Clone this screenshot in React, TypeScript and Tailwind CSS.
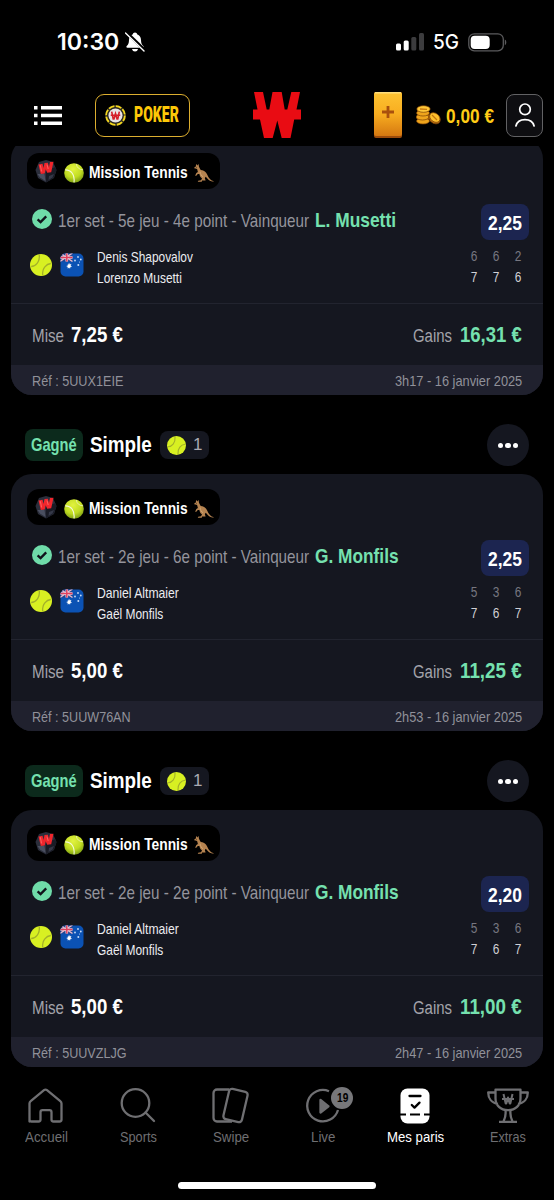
import React, { ReactNode, useLayoutEffect, useRef } from "react";

const FONT = "font-['Liberation_Sans_Narrow','Liberation_Sans',sans-serif]";

/* Text condensed horizontally to the width of its box. */
function Fit({ className = "", children }: { className?: string; children: ReactNode }) {
  const box = useRef<HTMLSpanElement>(null);
  const text = useRef<HTMLSpanElement>(null);
  useLayoutEffect(() => {
    if (box.current && text.current) {
      const ratio = box.current.clientWidth / text.current.offsetWidth;
      text.current.style.transform = `scaleX(${ratio})`;
    }
  });
  return (
    <span ref={box} className={`block shrink-0 ${className}`}>
      <span ref={text} className="inline-block origin-left whitespace-nowrap">
        {children}
      </span>
    </span>
  );
}

function BrandW({ className }: { className: string }) {
  return (
    <svg viewBox="0 0 48 46" className={className} fill="currentColor">
      <path d="M1 0h9l3.700 17.500h2.600L19.500 0h9.200l3 17.500h2.600L38.300 0H47l-3.500 17.500H48v10h-6.800l-3.700 18.500h-8.800L24.300 28.500 19.700 46H11L7 27.500H0v-10h4.500z" />
    </svg>
  );
}

function TennisBall({ className }: { className: string }) {
  return (
    <svg viewBox="0 0 22 22" className={className}>
      <circle cx="11" cy="11" r="11" fill="#d8f022" />
      <path d="M1.200 12.500C5.500 12.500 10 8 9.300.900M20.800 9.500C16.500 10 12 14 12.700 21" fill="none" stroke="#a3b02a" strokeWidth="1.300" />
    </svg>
  );
}

function TennisBallShaded({ className }: { className: string }) {
  return (
    <svg viewBox="0 0 22 22" className={className}>
      <defs>
        <radialGradient id="ballShade" cx="45%" cy="30%" r="72%">
          <stop offset="0" stopColor="#e2f340" />
          <stop offset=".6" stopColor="#c0dc22" />
          <stop offset="1" stopColor="#789a12" />
        </radialGradient>
      </defs>
      <circle cx="11" cy="11" r="10.800" fill="url(#ballShade)" />
      <path d="M1.500 7.500C8 7.500 12 13 11 21.300" fill="none" stroke="#f4f9d8" strokeWidth="1.300" />
      <path d="M13.500 1c.5 4 3.500 6.500 7.500 6.500" fill="none" stroke="#eef5bd" strokeWidth=".9" />
    </svg>
  );
}

function MissionBadge() {
  return (
    <svg viewBox="0 0 22 24" className="h-6 w-[22px] shrink-0">
      <path d="M4 3 11 1l7 2 3.500 8-2.500 8-8 4.500L3 19 .5 11z" fill="#2b2e3b" />
      <path d="m11 12 9.500-4 .8 4-2.800 7-7.500 4.300z" fill="#191b25" />
      <path d="m2.500 15 2.500 3.500 5.500 3.500-1-7z" fill="#4a4f60" />
      <path d="m14 17 5-2-1.500 3.500-4 2.500z" fill="#343847" />
      <path d="m3.500 5.500 4-.8 1 4.300 1-5 3.300-.3L14 8l1-5 3.500-.3-2.300 10.500-4 .6-1.500-3.600-1 4.200-3.900.6z" fill="#f0262c" />
      <path d="m5.300 6.200 1.300 6.300M12 5.500l1.200 4.500" stroke="#ff7d78" strokeWidth=".7" />
    </svg>
  );
}

function Kangaroo() {
  return (
    <svg viewBox="0 0 22 20" className="h-5 w-[22px]">
      <path d="M.8 5 2.800 3.400 3.200.8l1 1.600L5.600.9l.3 2.600c.7 1.300.9 2.500 2 3.500 1.800.3 3.800.9 5 2.400 1.600 1.900 2 4 3.400 5.800 1.200 1.500 2.500 2.600 4.700 3.100-2.300.6-4.600-.3-6.200-2.300l-2-2.300-1 1.200.8 2.700H9l-.2 1.200H4.800l.4-1 2.900-.5.9-2c-1.600-1-2.300-2.600-2.600-4.300l-1.600-.1-1.800 2.200-.8-.5 1.200-2.600 1.500-1L4.100 6z" fill="#b58350" />
      <path d="M7 8.500c.4 2.800 1.500 4.500 3 5.200" fill="none" stroke="#d2a673" strokeWidth="1" />
      <circle cx="3.400" cy="4.300" r=".45" fill="#2d1b0c" />
    </svg>
  );
}

function AustralianFlag() {
  return (
    <svg viewBox="0 0 24 24" className="h-6 w-6">
      <defs>
        <clipPath id="flagShape"><rect x=".5" y=".5" width="23" height="23" rx="5" /></clipPath>
      </defs>
      <g clipPath="url(#flagShape)">
        <path d="M0 0h24v24H0z" fill="#0b52b4" />
        <path d="M0 0h12.500v8.500H0z" fill="#23458f" />
        <path d="m0 0 12.500 8.500M12.500 0 0 8.500" stroke="#e5b9cb" strokeWidth="1.500" />
        <path d="M6.800 0v8.500M0 4.500h12.500" stroke="#f5dfe6" strokeWidth="2.600" />
        <path d="M6.800 0v8.500M0 4.500h12.500" stroke="#e0405e" strokeWidth="1.500" />
        <path d="m9 10.300.7 1.200 1.400-.2-.6 1.300 1 1-1.400.3-.1 1.400-1-.9-1.200.8.200-1.400-1.300-.6 1.300-.6v-1.400l1.100.8z" fill="#fff" stroke="#fff" strokeWidth=".4" />
        <g fill="#c8dcf8">
          <circle cx="18" cy="4" r=".9" /><circle cx="15" cy="7.500" r=".9" /><circle cx="20.800" cy="6.500" r=".9" /><circle cx="18.300" cy="12" r="1" /><circle cx="19.500" cy="9" r=".5" />
        </g>
      </g>
    </svg>
  );
}

type Bet = {
  market: string;
  pick: string;
  pickWidth: string;
  odds: string;
  players: { name: string; width: string; scores: number[] }[];
  stake: string;
  gain: string;
  reference: string;
  referenceWidth: string;
  date: string;
};

const ALTMAIER_MONFILS = [
  { name: "Daniel Altmaier", width: "w-[82px]", scores: [5, 3, 6] },
  { name: "Gaël Monfils", width: "w-[66px]", scores: [7, 6, 7] },
];

const BETS: Bet[] = [
  {
    market: "1er set - 5e jeu - 4e point - Vainqueur", pick: "L. Musetti", pickWidth: "w-[81px]", odds: "2,25",
    players: [
      { name: "Denis Shapovalov", width: "w-[96px]", scores: [6, 6, 2] },
      { name: "Lorenzo Musetti", width: "w-[85px]", scores: [7, 7, 6] },
    ],
    stake: "7,25 €", gain: "16,31 €", reference: "Réf : 5UUX1EIE", referenceWidth: "w-[91px]", date: "3h17 - 16 janvier 2025",
  },
  {
    market: "1er set - 2e jeu - 6e point - Vainqueur", pick: "G. Monfils", pickWidth: "w-[84px]", odds: "2,25",
    players: ALTMAIER_MONFILS, stake: "5,00 €", gain: "11,25 €", reference: "Réf : 5UUW76AN", referenceWidth: "w-[99px]", date: "2h53 - 16 janvier 2025",
  },
  {
    market: "1er set - 2e jeu - 2e point - Vainqueur", pick: "G. Monfils", pickWidth: "w-[84px]", odds: "2,20",
    players: ALTMAIER_MONFILS, stake: "5,00 €", gain: "11,00 €", reference: "Réf : 5UUVZLJG", referenceWidth: "w-[95px]", date: "2h47 - 16 janvier 2025",
  },
];

function BetCard({ bet }: { bet: Bet }) {
  return (
    <article className="mx-[11px] flex h-[257px] shrink-0 flex-col overflow-hidden rounded-[21px] bg-[#151720]">
      <div className="mt-[15px] ml-4 flex h-9 w-[193px] shrink-0 items-center rounded-xl bg-black pl-2">
        <MissionBadge />
        <TennisBallShaded className="mt-[3px] ml-[7px] h-5 w-5" />
        <Fit className="mt-[3px] ml-[5px] w-[99px] text-[17px] leading-9 font-bold text-white">Mission Tennis</Fit>
        <span className="mt-[4px] ml-[5px]"><Kangaroo /></span>
      </div>

      <div className="mt-[13px] flex h-9 shrink-0 pl-[21px]">
        <svg viewBox="0 0 20 20" className="mt-[7px] h-5 w-5 shrink-0">
          <circle cx="10" cy="10" r="10" fill="#6fdca9" />
          <path d="m5.600 10.300 3 2.800 5.600-5.700" fill="none" stroke="#10131b" strokeWidth="2.300" />
        </svg>
        <div className="mt-[2px] flex h-8 flex-1 items-baseline pl-[6px] leading-8">
          <Fit className="w-[251px] text-[18.500px] text-[#94949c]">{bet.market}</Fit>
          <Fit className={`ml-[6px] text-[21px] font-bold text-[#75e1af] ${bet.pickWidth}`}>{bet.pick}</Fit>
        </div>
        <div className="mt-[2px] mr-[14px] flex h-9 w-[48px] shrink-0 justify-center rounded-lg bg-[#1c2550] pt-[1px]">
          <Fit className="w-[34px] text-[20.500px] leading-9 font-bold text-white">{bet.odds}</Fit>
        </div>
      </div>

      <div className="mt-2 flex h-[42px] shrink-0 items-center pl-[19px]">
        <TennisBall className="-mt-[4px] h-[22px] w-[22px] shrink-0" />
        <span className="-mt-[4px] ml-2 shrink-0"><AustralianFlag /></span>
        <div className="ml-[13px] flex-1 text-[15px] leading-[21px]">
          {bet.players.map((player, row) => (
            <div key={player.name} className="flex justify-between text-[#ececf0]">
              <Fit className={player.width}>{player.name}</Fit>
              <div className={row === 0 ? "mr-[14px] grid grid-cols-[22px_22px_22px] text-center text-sm leading-[21px] text-[#777780]" : "mr-[14px] grid grid-cols-[22px_22px_22px] text-center text-sm leading-[21px] text-[#d0d0d5]"}>
                {player.scores.map((score, set) => (
                  <span key={set} className="scale-x-[0.850]">{score}</span>
                ))}
              </div>
            </div>
          ))}
        </div>
      </div>

      <div className="mt-[15px] flex h-[62px] shrink-0 items-baseline border-t border-[#22242f] px-[21px] leading-[62px]">
        <Fit className="w-[32px] text-[18px] text-[#a3a3aa]">Mise</Fit>
        <Fit className="ml-[7px] w-[52px] text-[21.500px] font-bold text-white">{bet.stake}</Fit>
        <Fit className="ml-auto w-[39px] text-[18px] text-[#a3a3aa]">Gains</Fit>
        <Fit className="ml-[8px] w-[62px] text-[21.500px] font-bold text-[#75e1af]">{bet.gain}</Fit>
      </div>

      <footer className="flex flex-1 justify-between bg-[#20212e] px-[21px] text-[15px] leading-[32px] text-[#91919a]">
        <Fit className={bet.referenceWidth}>{bet.reference}</Fit>
        <Fit className="w-[127px]">{bet.date}</Fit>
      </footer>
    </article>
  );
}

function BetTitle() {
  return (
    <div className="flex h-[79px] shrink-0 items-center pt-[21px] pr-[25px] pl-[25px]">
      <div className="flex w-full items-center">
        <div className="flex h-8 w-[58px] justify-center rounded-lg bg-[#0c2a1c]">
          <Fit className="w-[46px] text-[18.500px] leading-8 font-bold text-[#75e1af]">Gagné</Fit>
        </div>
        <Fit className="ml-[7px] w-[62px] text-[22.500px] leading-8 font-bold text-white">Simple</Fit>
        <div className="ml-2 flex h-7 w-[49px] items-center rounded-lg bg-[#151720] pl-[7px]">
          <TennisBall className="h-[19px] w-[19px]" />
          <span className="ml-[7px] text-[17px] leading-7 text-[#aaaab1]">1</span>
        </div>
        <button className="ml-auto flex h-[42px] w-[42px] items-center justify-center gap-[2px] rounded-full bg-[#151720] pt-[1px]">
          <i className="h-[5.600px] w-[5.600px] rounded-full bg-white" />
          <i className="h-[5.600px] w-[5.600px] rounded-full bg-white" />
          <i className="h-[5.600px] w-[5.600px] rounded-full bg-white" />
        </button>
      </div>
    </div>
  );
}

function StatusBar() {
  return (
    <div className="flex h-[84px] shrink-0 items-center pl-[57px] font-['Inter',sans-serif] text-white">
      <Fit className="w-[62px] text-[23.500px] leading-[84px] font-semibold">10:30</Fit>
      <svg viewBox="0 0 20 20" className="ml-[6px] h-5 w-5">
        <path d="M10 .5c1.200 0 2 .8 2.100 1.800 2.600.9 3.800 3 3.900 5.700.1 3.300.8 4.600 2.300 6 .6.700.3 1.800-.7 1.800H2.400c-1 0-1.300-1.100-.7-1.800 1.500-1.400 2.200-2.700 2.300-6 .1-2.700 1.300-4.800 3.900-5.700C8 1.300 8.800.5 10 .5zM7 17h6c-.4 1.700-1.500 2.500-3 2.500S7.400 18.700 7 17z" fill="#fff" />
        <path d="M1 0 20 18.500" stroke="#000" strokeWidth="3.200" />
        <path d="M.5 1 19 19" stroke="#fff" strokeWidth="1.400" strokeLinecap="round" />
      </svg>
      <svg viewBox="0 0 28 18" className="ml-auto h-[18px] w-7">
        <rect y="10.500" width="5" height="7" rx="1.500" fill="#fff" />
        <rect x="7.700" y="7.500" width="5" height="10" rx="1.500" fill="#fff" />
        <rect x="15.300" y="4" width="5" height="13.500" rx="1.500" fill="#3c3c3e" />
        <rect x="23" y="0" width="5" height="17.500" rx="1.500" fill="#3c3c3e" />
      </svg>
      <Fit className="ml-[9px] w-[26px] text-[20.500px] leading-[84px] font-medium">5G</Fit>
      <svg viewBox="0 0 40 19" className="mr-[46px] ml-[9px] h-[19px] w-10">
        <rect x=".8" y=".8" width="34.500" height="17" rx="5.500" fill="none" stroke="#5b5b5d" strokeWidth="1.300" />
        <rect x="2.700" y="2.700" width="19" height="13.200" rx="4" fill="#fff" />
        <path d="M36.800 6.500c2 .7 2 5 0 5.700z" fill="#5b5b5d" />
      </svg>
    </div>
  );
}

function AppHeader() {
  return (
    <div className="flex h-[62px] shrink-0 items-center pr-[11px] pl-[34px]">
      <svg viewBox="0 0 28 19" className="h-[19px] w-7 shrink-0" fill="#fff">
        <path d="M0 0h3.500v3.500H0zM7 0h21v3.500H7zM0 7.700h3.500v3.500H0zM7 7.700h21v3.500H7zM0 15.400h3.500v3.500H0zM7 15.400h21v3.500H7z" />
      </svg>
      <div className="ml-[33px] flex h-[43px] w-[95px] shrink-0 items-center rounded-[9px] border-[1.500px] border-[#dcae2f] pl-[9px]">
        <svg viewBox="0 0 22 22" className="h-[21px] w-[21px] shrink-0">
          <circle cx="11" cy="11" r="11" fill="#29271f" />
          <circle cx="11" cy="11" r="9.800" fill="none" stroke="#f5d81c" strokeWidth="1.900" strokeDasharray="6.200 1.500" />
          <circle cx="11" cy="11" r="7.400" fill="#e7e3e4" />
          <path d="m7 7 1.600 7.500h.8L11 9l1.600 5.500h.8L15 7M6 10.800h10" fill="none" stroke="#d51e28" strokeWidth="1.700" />
        </svg>
        <Fit className="ml-[8px] w-[45px] bg-transparent font-['Roboto','Liberation_Sans',sans-serif] text-[21.500px] leading-10 font-black text-[#fdc808]">POKER</Fit>
      </div>
      <BrandW className="ml-[63px] h-[46px] w-12 shrink-0 text-[#e90c13]" />
      <svg viewBox="0 0 28 46" className="ml-[73px] h-[46px] w-7 shrink-0">
        <defs>
          <linearGradient id="ticket" x2="0" y2="1">
            <stop offset="0" stopColor="#fdc332" /><stop offset=".5" stopColor="#f8ad20" /><stop offset="1" stopColor="#d57811" />
          </linearGradient>
        </defs>
        <rect width="28" height="46" rx="2" fill="#9c4b0b" />
        <rect width="28" height="44" rx="2" fill="url(#ticket)" />
        <path d="M1 .8h26" stroke="#ffe28a" strokeWidth="1.300" />
        <path d="M14 14v12M8 20h12" stroke="#a9500d" strokeWidth="2.800" />
      </svg>
      <svg viewBox="0 0 25 21" className="ml-[14px] h-[21px] w-[25px] shrink-0">
        <path d="M1 4v12c0 4 12 4 12 0V4z" fill="#b66a0b" />
        <g fill="#efa51c" stroke="#7b4206" strokeWidth=".7">
          <ellipse cx="7" cy="16" rx="6.500" ry="3" /><ellipse cx="6.500" cy="12" rx="6.500" ry="3" />
          <ellipse cx="7" cy="8" rx="6.500" ry="3" /><ellipse cx="7.500" cy="4" rx="6.700" ry="3.300" fill="#ffc737" />
          <ellipse cx="18.500" cy="13.500" rx="6.300" ry="4.700" transform="rotate(38 18.500 13.500)" fill="#c87911" />
          <ellipse cx="18.800" cy="12.500" rx="5.700" ry="4.200" transform="rotate(38 18.800 12.500)" fill="#ffc12c" />
        </g>
        <path d="m4 4 7 .3M16 10l5 5" stroke="#c57710" strokeWidth="1.300" />
      </svg>
      <Fit className="mt-[1px] ml-[5px] w-[48px] text-[20.500px] leading-10 font-bold text-[#ffcb16]">0,00 €</Fit>
      <div className="ml-auto flex h-[43px] w-[37px] shrink-0 items-center justify-center rounded-lg border border-[#626264] bg-[#0e0e11]">
        <svg viewBox="0 0 20 24" className="h-6 w-5" fill="none" stroke="#fff" strokeWidth="1.700" strokeLinecap="round">
          <circle cx="10" cy="6.300" r="5.300" /><path d="M.9 23C3 14.500 17 14.500 19.100 23" />
        </svg>
      </div>
    </div>
  );
}

const TABS: { label: string; width: string; icon: ReactNode }[] = [
  {
    label: "Accueil", width: "w-[43px]",
    icon: <path d="M2.500 34.500V16.500c0-1 .4-1.800 1.200-2.400L17 3.200c1-.8 2-.8 3 0l13.300 10.900c.8.600 1.200 1.400 1.200 2.400v16c0 1.200-.8 2-2 2h-6c-1.200 0-2-.8-2-2v-7.300c0-1.200-.8-2-2-2h-7c-1.200 0-2 .8-2 2v7.300c0 1.200-.8 2-2 2H4.500c-1.200 0-2-.8-2-2z" />,
  },
  { label: "Sports", width: "w-[37px]", icon: <><circle cx="16.500" cy="16" r="13.800" /><path d="m26.500 25.500 8.500 8.500" strokeLinecap="round" /></> },
  {
    label: "Swipe", width: "w-[36px]",
    icon: <><path d="M17 2.500H5a3.500 3.500 0 0 0-3.500 3.500v25A3.500 3.500 0 0 0 5 34.500h15" /><rect x="14" y="3" width="19" height="31" rx="3" transform="rotate(13 23.500 18.500)" fill="#000" /></>,
  },
  {
    label: "Live", width: "w-[24px]",
    icon: <><path d="M25 4.200A15.700 15.700 0 1 0 34 23" /><path d="M16.500 13v12.500l8-6.200z" fill="currentColor" /></>,
  },
  {
    label: "Mes paris", width: "w-[57px]",
    icon: <><rect x="4.500" y="1.500" width="29" height="35" rx="7" fill="currentColor" stroke="none" /><path d="M13.500 9h11M15.800 18l2.700 2.600 5-5" stroke="#000" strokeWidth="2.300" strokeLinecap="round" /><path d="M4 27.500h6M14 27.500h10M28 27.500h6" stroke="#000" strokeWidth="2" /></>,
  },
  {
    label: "Extras", width: "w-[36px]",
    icon: <><path d="M6.500 2.700h25v8.500c0 7-5 12-12.500 12s-12.500-5-12.500-12zM6.500 5.500H-.8c0 6 3.500 10.500 9.800 11.500M31.500 5.500h7.300c0 6-3.500 10.500-9.800 11.500M16.500 24c.5 4-.5 7.500-2 10.500M21.500 24c-.5 4 .5 7.500 2 10.500M10 34.800h18" /><path d="m14.500 7 2.200 9.500h.6L19 10.500l1.700 6h.6L23.500 7M13 12h12" strokeWidth="2" /></>,
  },
];

function BottomNav() {
  return (
    <nav className="flex h-[128px] shrink-0 flex-col items-center bg-black">
      <div className="grid w-full grid-cols-6 pt-[15px]">
        {TABS.map((tab) => (
          <div key={tab.label} className={tab.label === "Mes paris" ? "flex flex-col items-center text-white" : "flex flex-col items-center text-[#6f6f72]"}>
            <div className="relative h-[38px] w-[38px]">
              <svg viewBox="0 0 38 38" className="h-full w-full overflow-visible" fill="none" stroke="currentColor" strokeWidth="2.300" strokeLinejoin="round">{tab.icon}</svg>
              {tab.label === "Live" && (
                <span className="absolute top-0 left-[27px] flex h-[22px] w-[22px] items-center justify-center rounded-full bg-[#77777a] text-[12px] font-bold text-black">
                  <Fit className="w-[11px]">19</Fit>
                </span>
              )}
            </div>
            <Fit className={`mt-[1px] text-[15.500px] leading-[22px] ${tab.width}`}>{tab.label}</Fit>
          </div>
        ))}
      </div>
      <div className="mt-auto mb-[11px] h-[7px] w-[198px] rounded-full bg-white" />
    </nav>
  );
}

export default function App() {
  return (
    <div className={`flex h-[1200px] w-[554px] flex-col overflow-hidden bg-black ${FONT}`}>
      <StatusBar />
      <AppHeader />
      <main className="flex min-h-0 flex-1 flex-col overflow-hidden">
        <div className="-mt-[8px] flex flex-col">
          {BETS.map((bet, index) => (
            <React.Fragment key={bet.reference}>
              {index > 0 && <BetTitle />}
              <BetCard bet={bet} />
            </React.Fragment>
          ))}
        </div>
      </main>
      <BottomNav />
    </div>
  );
}
